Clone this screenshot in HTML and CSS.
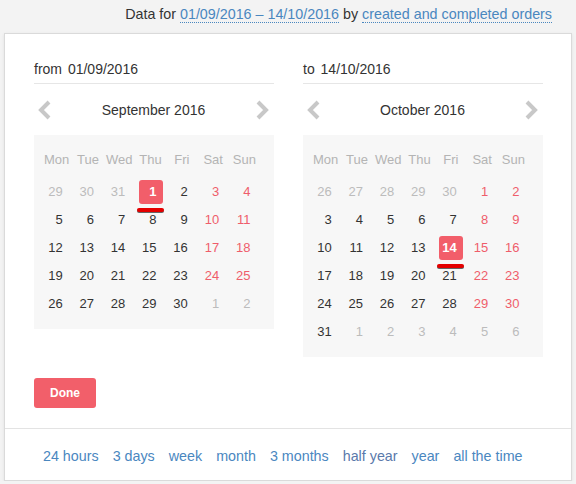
FILE: index.html
```html
<!DOCTYPE html>
<html lang="en">
<head>
    <meta charset="UTF-8">
    <meta name="viewport" content="width=device-width, initial-scale=1.0">
    <title>Date range</title>
    <link rel="stylesheet" href="styles.css">
</head>
<body>
    <div class="summary">
        Data for&nbsp;<span class="marked"><a class="dotted" href="#">01/09/2016 – 14/10/2016</a> by <a class="dotted" href="#">created and completed orders</a></span>
    </div>

    <div class="picker">
        <div class="calendars">
            <div class="calendar">
                <div class="date-field"><span class="label">from</span> 01/09/2016</div>
                <div class="month-nav">
                    <svg class="chevron" width="14" height="20" viewBox="0 0 14 20"><polyline points="11,2 3,10 11,18" /></svg>
                    <span class="month-title">September 2016</span>
                    <svg class="chevron" width="14" height="20" viewBox="0 0 14 20"><polyline points="3,2 11,10 3,18" /></svg>
                </div>
                <div class="grid">
                    <div class="dow">Mon</div><div class="dow">Tue</div><div class="dow">Wed</div><div class="dow">Thu</div><div class="dow">Fri</div><div class="dow">Sat</div><div class="dow">Sun</div>

                    <div class="day muted"><span>29</span></div><div class="day muted"><span>30</span></div><div class="day muted"><span>31</span></div><div class="day selected"><span>1</span></div><div class="day"><span>2</span></div><div class="day weekend"><span>3</span></div><div class="day weekend"><span>4</span></div>
                    <div class="day"><span>5</span></div><div class="day"><span>6</span></div><div class="day"><span>7</span></div><div class="day"><span>8</span></div><div class="day"><span>9</span></div><div class="day weekend"><span>10</span></div><div class="day weekend"><span>11</span></div>
                    <div class="day"><span>12</span></div><div class="day"><span>13</span></div><div class="day"><span>14</span></div><div class="day"><span>15</span></div><div class="day"><span>16</span></div><div class="day weekend"><span>17</span></div><div class="day weekend"><span>18</span></div>
                    <div class="day"><span>19</span></div><div class="day"><span>20</span></div><div class="day"><span>21</span></div><div class="day"><span>22</span></div><div class="day"><span>23</span></div><div class="day weekend"><span>24</span></div><div class="day weekend"><span>25</span></div>
                    <div class="day"><span>26</span></div><div class="day"><span>27</span></div><div class="day"><span>28</span></div><div class="day"><span>29</span></div><div class="day"><span>30</span></div><div class="day muted"><span>1</span></div><div class="day muted"><span>2</span></div>
                </div>
            </div>

            <div class="calendar">
                <div class="date-field"><span class="label">to</span> 14/10/2016</div>
                <div class="month-nav">
                    <svg class="chevron" width="14" height="20" viewBox="0 0 14 20"><polyline points="11,2 3,10 11,18" /></svg>
                    <span class="month-title">October 2016</span>
                    <svg class="chevron" width="14" height="20" viewBox="0 0 14 20"><polyline points="3,2 11,10 3,18" /></svg>
                </div>
                <div class="grid">
                    <div class="dow">Mon</div><div class="dow">Tue</div><div class="dow">Wed</div><div class="dow">Thu</div><div class="dow">Fri</div><div class="dow">Sat</div><div class="dow">Sun</div>

                    <div class="day muted"><span>26</span></div><div class="day muted"><span>27</span></div><div class="day muted"><span>28</span></div><div class="day muted"><span>29</span></div><div class="day muted"><span>30</span></div><div class="day weekend"><span>1</span></div><div class="day weekend"><span>2</span></div>
                    <div class="day"><span>3</span></div><div class="day"><span>4</span></div><div class="day"><span>5</span></div><div class="day"><span>6</span></div><div class="day"><span>7</span></div><div class="day weekend"><span>8</span></div><div class="day weekend"><span>9</span></div>
                    <div class="day"><span>10</span></div><div class="day"><span>11</span></div><div class="day"><span>12</span></div><div class="day"><span>13</span></div><div class="day selected"><span>14</span></div><div class="day weekend"><span>15</span></div><div class="day weekend"><span>16</span></div>
                    <div class="day"><span>17</span></div><div class="day"><span>18</span></div><div class="day"><span>19</span></div><div class="day"><span>20</span></div><div class="day"><span>21</span></div><div class="day weekend"><span>22</span></div><div class="day weekend"><span>23</span></div>
                    <div class="day"><span>24</span></div><div class="day"><span>25</span></div><div class="day"><span>26</span></div><div class="day"><span>27</span></div><div class="day"><span>28</span></div><div class="day weekend"><span>29</span></div><div class="day weekend"><span>30</span></div>
                    <div class="day"><span>31</span></div><div class="day muted"><span>1</span></div><div class="day muted"><span>2</span></div><div class="day muted"><span>3</span></div><div class="day muted"><span>4</span></div><div class="day muted"><span>5</span></div><div class="day muted"><span>6</span></div>
                </div>
            </div>
        </div>

        <div class="actions">
            <button class="done-button">Done</button>
        </div>

        <div class="presets">
            <a href="#">24 hours</a>
            <a href="#">3 days</a>
            <a href="#">week</a>
            <a href="#">month</a>
            <a href="#">3 months</a>
            <a href="#" class="visited">half year</a>
            <a href="#">year</a>
            <a href="#">all the time</a>
        </div>
    </div>
</body>
</html>
```

FILE: styles.css
```css
body {
    margin: 0;
    background-color: #f3f3f3;
    color: #333;
    font-family: "Liberation Sans", Arial, sans-serif;
    font-size: 14px;
}

a {
    color: #4a87bf;
    text-decoration: none;
}

.summary {
    display: flex;
    justify-content: flex-end;
    padding: 4px 24px 0 0;
    height: 29px;
    line-height: 20px;
    font-size: 14.3px;
    white-space: nowrap;
}

.marked {
    position: relative;
}

/* red highlight stroke under the range text */
.marked::after {
    content: "";
    position: absolute;
    left: 0;
    right: 0;
    bottom: -8px;
    height: 4px;
    border-radius: 2px;
    background-color: #e40000;
}

.dotted {
    border-bottom: 1px dotted #4a87bf;
}

.picker {
    position: relative;
    margin-left: 4px;
    width: 566px;
    background-color: #fff;
    border: 1px solid #dadada;
    box-shadow: 0 1px 3px rgba(0, 0, 0, 0.08);
}

.calendars {
    display: flex;
    gap: 29px;
    padding: 25px 28px 0 29px;
    align-items: flex-start;
}

.calendar {
    width: 240px;
}

.date-field {
    line-height: 20px;
    padding-bottom: 4px;
    border-bottom: 1px solid #e6e6e6;
}

.date-field .label {
    margin-right: 2px;
}

.month-nav {
    height: 51px;
    display: flex;
    align-items: center;
    justify-content: space-between;
    padding: 0 5px 0 4px;
}

.month-title {
    font-size: 14px;
}

.chevron polyline {
    fill: none;
    stroke: #c8c8c8;
    stroke-width: 4;
}

.grid {
    display: grid;
    grid-template-columns: repeat(7, 31.3px);
    grid-template-rows: 32px;
    grid-auto-rows: 28px;
    padding: 11px 0 11px 7px;
    background-color: #f7f7f7;
    font-size: 13px;
}

.dow {
    color: #b4b4b4;
    text-align: center;
    line-height: 28px;
}

.day {
    display: flex;
    align-items: center;
    justify-content: center;
}

.day span {
    position: relative;
    box-sizing: border-box;
    width: 24px;
    height: 24px;
    line-height: 24px;
    padding-right: 6px;
    text-align: right;
    border-radius: 3px;
}

.day.weekend {
    color: #ef5d6b;
}

.day.muted {
    color: #bcbcbc;
}

.day.selected span {
    background-color: #f25e6a;
    color: #fff;
    font-weight: bold;
}

.day.selected span::after {
    content: "";
    position: absolute;
    left: -2px;
    right: -1px;
    bottom: -8px;
    height: 4px;
    border-radius: 2px;
    background-color: #e40000;
    box-shadow: 0 1px 0 #666;
}

.actions {
    padding: 21px 29px 20px;
}

.done-button {
    width: 62px;
    height: 30px;
    border: none;
    border-radius: 3px;
    background-color: #f25f6a;
    color: #fff;
    font-family: "Liberation Sans", Arial, sans-serif;
    font-size: 12px;
    font-weight: bold;
    cursor: pointer;
}

.presets {
    display: flex;
    gap: 14px;
    padding: 17px 0 14px 38px;
    line-height: 20px;
    font-size: 14.3px;
    border-top: 1px solid #e3e3e3;
}

.presets a.visited {
    color: #5a79ab;
}
```
